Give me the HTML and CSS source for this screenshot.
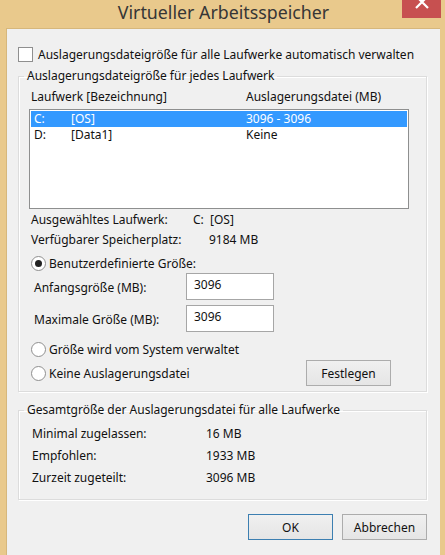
FILE: index.html
```html
<!DOCTYPE html>
<html lang="de">
<head>
<meta charset="UTF-8">
<title>Virtueller Arbeitsspeicher</title>
<link rel="stylesheet" href="styles.css">
</head>
<body>
<div class="dlg">
    <div class="dlg-title">
        <span class="dlg-caption">Virtueller Arbeitsspeicher</span>
        <button class="dlg-close" title="Schließen">
            <svg width="16" height="16" viewBox="0 0 16 16"><path d="M2 1 L14 13 M14 1 L2 13" stroke="#fff" stroke-width="2.2" fill="none"/></svg>
        </button>
    </div>
    <div class="dlg-client">
        <label class="check-row"><span class="checkbox"></span>Auslagerungsdateigröße für alle Laufwerke automatisch verwalten</label>

        <fieldset class="group">
            <legend>Auslagerungsdateigröße für jedes Laufwerk</legend>
            <div class="group-body">
                <div class="list-head">
                    <span class="head-drive">Laufwerk [Bezeichnung]</span>
                    <span>Auslagerungsdatei (MB)</span>
                </div>
                <div class="listbox">
                    <div class="list-row selected"><span class="c-letter">C:</span><span class="c-label">[OS]</span><span>3096 - 3096</span></div>
                    <div class="list-row"><span class="c-letter">D:</span><span class="c-label">[Data1]</span><span>Keine</span></div>
                </div>
                <div class="info-row top"><span class="info-key sel">Ausgewähltes Laufwerk:</span><span>C:&nbsp; [OS]</span></div>
                <div class="info-row"><span class="info-key free">Verfügbarer Speicherplatz:</span><span>9184 MB</span></div>

                <label class="radio-row first"><span class="radio checked"></span>Benutzerdefinierte Größe:</label>
                <div class="size-row"><span class="size-label">Anfangsgröße (MB):</span><input class="edit" type="text" value="3096"></div>
                <div class="size-row second"><span class="size-label">Maximale Größe (MB):</span><input class="edit" type="text" value="3096"></div>
                <label class="radio-row system"><span class="radio"></span>Größe wird vom System verwaltet</label>
                <div class="radio-row none">
                    <label class="radio-label"><span class="radio"></span>Keine Auslagerungsdatei</label>
                    <button class="btn set">Festlegen</button>
                </div>
            </div>
        </fieldset>

        <fieldset class="group total">
            <legend>Gesamtgröße der Auslagerungsdatei für alle Laufwerke</legend>
            <div class="group-body">
                <div class="total-row"><span class="total-key">Minimal zugelassen:</span><span>16 MB</span></div>
                <div class="total-row"><span class="total-key">Empfohlen:</span><span>1933 MB</span></div>
                <div class="total-row"><span class="total-key">Zurzeit zugeteilt:</span><span>3096 MB</span></div>
            </div>
        </fieldset>

        <div class="dlg-buttons">
            <button class="btn default">OK</button>
            <button class="btn">Abbrechen</button>
        </div>
    </div>
</div>
</body>
</html>
```

FILE: styles.css
```css
body {
    margin: 0;
    background: #e9c98c;
    font-family: "Noto Sans", "Liberation Sans", sans-serif;
    font-size: 12px;
    color: #111;
}
.dlg {
    width: 445px;
    height: 555px;
    display: flex;
    flex-direction: column;
}
.dlg-title {
    position: relative;
    height: 28px;
    text-align: center;
}
.dlg-caption {
    display: inline-block;
    margin-left: 2px;
    font-size: 17.8px;
    line-height: normal;
    color: #363636;
}
.dlg-close {
    position: absolute;
    top: 0;
    right: 4px;
    width: 39px;
    height: 18px;
    padding: 0;
    border: none;
    background: #c75050;
    display: flex;
    justify-content: center;
    align-items: flex-start;
}
.dlg-close svg {
    margin-top: -5px;
}
.dlg-client {
    flex: 1;
    margin-left: 6px;
    width: 434px;
    box-sizing: border-box;
    border-top: 1px solid #d6b77c;
    border-left: 1px solid #d6b77c;
    background: #f0f0f0;
    padding: 18px 13px 0 11px;
    display: flex;
    flex-direction: column;
}

/* checkbox + radio */
.check-row {
    display: flex;
    align-items: center;
    height: 15px;
    gap: 5px;
    white-space: nowrap;
}
.checkbox {
    width: 13px;
    height: 13px;
    border: 1px solid #8f8f8f;
    background: #fff;
}
.radio {
    width: 13px;
    height: 13px;
    border: 1px solid #8f8f8f;
    border-radius: 50%;
    background: #fff;
    display: flex;
    align-items: center;
    justify-content: center;
    flex: none;
}
.radio.checked::after {
    content: "";
    width: 7px;
    height: 7px;
    border-radius: 50%;
    background: #222;
}

/* group boxes */
.group {
    margin: 6px 0 0 0;
    padding: 0;
    min-width: 0;
    border: 1px solid #dcdcdc;
    box-shadow: inset 1px 1px 0 #fff, 1px 1px 0 #fff;
}
.group legend {
    margin-left: 5px;
    padding: 0 3px;
    line-height: 16px;
    white-space: nowrap;
}
.group-body {
    padding: 5px 0 5px 10px;
}
.group.total {
    margin-top: 10px;
}
.group.total .group-body {
    padding-bottom: 10px;
}

/* drive list */
.list-head {
    display: flex;
    height: 16px;
    line-height: 16px;
    padding-left: 2px;
}
.head-drive {
    width: 215px;
}
.listbox {
    margin-top: 4px;
    width: 380px;
    height: 100px;
    box-sizing: border-box;
    border: 1px solid #8e8f8f;
    background: #fff;
    padding: 1px;
}
.list-row {
    display: flex;
    height: 16px;
    line-height: 16px;
    padding-left: 3px;
}
.list-row.selected {
    background: #3399ff;
    color: #fff;
}
.c-letter {
    width: 37px;
}
.c-label {
    width: 175px;
}

.info-row {
    display: flex;
    height: 20px;
    line-height: 20px;
    padding-left: 2px;
}
.info-row.top {
    margin-top: 1px;
}
.info-key.sel {
    width: 162px;
}
.info-key.free {
    width: 178px;
}

.radio-row {
    display: flex;
    align-items: center;
    height: 20px;
    gap: 3px;
    padding-left: 2px;
}
.radio-row.first {
    margin-top: 3px;
}
.radio-row.system {
    margin-top: 7px;
}
.radio-row.none {
    margin-top: 1px;
    height: 26px;
}
.radio-label {
    display: flex;
    align-items: center;
    gap: 3px;
}

.size-row {
    display: flex;
    align-items: center;
    height: 27px;
    padding-left: 5px;
}
.size-row.second {
    margin-top: 5px;
}
.size-label {
    width: 152px;
    padding-top: 2px;
}
.edit {
    width: 88px;
    height: 27px;
    box-sizing: border-box;
    border: 1px solid #a6a6a6;
    background: #fff;
    font: inherit;
    color: #111;
    padding: 0 6px 5px 7px;
    margin: 0;
    outline: none;
}

/* buttons */
.btn {
    width: 85px;
    height: 26px;
    box-sizing: border-box;
    border: 1px solid #acacac;
    background: linear-gradient(#f0f0f0, #e5e5e5);
    font: inherit;
    color: #111;
    padding: 0;
}
.btn.set {
    margin-left: auto;
    margin-right: 35px;
}
.btn.default {
    border-color: #3c7fb1;
}

.total-row {
    display: flex;
    height: 22px;
    line-height: 22px;
    padding-left: 3px;
}
.total-key {
    width: 174px;
}

.dlg-buttons {
    margin-top: 14px;
    display: flex;
    justify-content: flex-end;
    gap: 9px;
}
```
